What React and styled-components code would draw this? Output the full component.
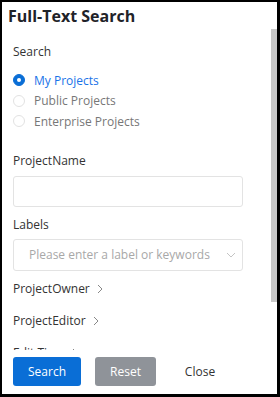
import React, { useState } from "react";
import styled, { createGlobalStyle } from "styled-components";

const Global = createGlobalStyle`
  html, body { margin: 0; padding: 0; background: #fff; }
  body { font-family: "Open Sans", "Noto Sans", sans-serif; color: #333; }
`;

const Frame = styled.div`
  width: 280px;
  height: 397px;
  box-sizing: border-box;
  border-style: solid;
  border-color: #000;
  border-width: 2px 3px 3px 2px;
  background: #fff;
  display: flex;
  flex-direction: column;
  position: relative;
`;

const Header = styled.div`
  height: 27px;
  padding-left: 6px;
  display: flex;
  align-items: center;
  font-size: 16px;
  font-weight: 700;
  color: #1f2329;
  flex-shrink: 0;
`;

const Body = styled.div`
  flex: 1;
  overflow: hidden;
  padding: 14px 0 0 11px;
  position: relative;
`;

const Thumb = styled.div`
  position: absolute;
  right: 0;
  top: 0;
  width: 6px;
  height: 273px;
  background: #c8c8c8;
`;

const Label = styled.div`
  font-size: 12px;
  line-height: 18px;
  color: #333;
  margin-bottom: ${(p) => p.$mb || 0}px;
`;

const RadioGroup = styled.div`
  display: flex;
  flex-direction: column;
  gap: 2px;
  margin-bottom: 21px;
`;

const RadioRow = styled.label`
  display: flex;
  align-items: center;
  gap: 9px;
  height: 18.5px;
  font-size: 12px;
  color: ${(p) => (p.$on ? "#1a73e8" : "#777")};
  cursor: pointer;
`;

const Dot = styled.span`
  width: 12px;
  height: 12px;
  box-sizing: border-box;
  border-radius: 50%;
  border: 1px solid ${(p) => (p.$on ? "#0a6ed6" : "#e2e2e2")};
  background: ${(p) => (p.$on ? "#0a6ed6" : "#fff")};
  display: flex;
  align-items: center;
  justify-content: center;
  &::after {
    content: "";
    width: 4px;
    height: 4px;
    border-radius: 50%;
    background: ${(p) => (p.$on ? "#fff" : "transparent")};
  }
`;

const Input = styled.input`
  display: block;
  width: 230px;
  height: 31px;
  box-sizing: border-box;
  border: 1px solid #e3e3e3;
  border-radius: 3px;
  outline: none;
  margin-bottom: 9px;
`;

const Select = styled.div`
  width: 230px;
  height: 32px;
  box-sizing: border-box;
  border: 1px solid #e3e3e3;
  border-radius: 3px;
  display: flex;
  align-items: center;
  justify-content: space-between;
  padding: 0 6px 0 15px;
  font-size: 12px;
  color: #a8a8a8;
  margin-bottom: 9px;
  white-space: nowrap;
  overflow: hidden;
`;

const Placeholder = styled.span`
  overflow: hidden;
  width: 196px;
`;

const Expand = styled.div`
  display: flex;
  align-items: center;
  gap: 5px;
  height: 18px;
  font-size: 12px;
  color: #333;
  margin-bottom: 14px;
`;

const Footer = styled.div`
  height: 44px;
  flex-shrink: 0;
  display: flex;
  align-items: center;
  padding: 0 0 2px 11px;
  box-sizing: border-box;
  background: #fff;
`;

const Button = styled.button`
  height: 29px;
  width: ${(p) => p.$w}px;
  padding: 0;
  border: none;
  border-radius: 3px;
  font-family: inherit;
  font-size: 12px;
  color: ${(p) => p.$color};
  background: ${(p) => p.$bg};
  margin-right: ${(p) => p.$mr}px;
  cursor: pointer;
`;

const Chevron = ({ dir }) => (
  <svg width="10" height="10" viewBox="0 0 10 10" fill="none" stroke={dir === "down" ? "#c4c4c4" : "#888"} strokeWidth="1">
    {dir === "down" ? <path d="M1 3l4 4 4-4" /> : <path d="M3 1l4 4-4 4" />}
  </svg>
);

const scopes = ["My Projects", "Public Projects", "Enterprise Projects"];

export default function App() {
  const [scope, setScope] = useState(0);
  return (
    <>
      <Global />
      <Frame>
        <Header>Full-Text Search</Header>
        <Body>
          <Thumb />
          <Label $mb={10}>Search</Label>
          <RadioGroup>
            {scopes.map((s, i) => (
              <RadioRow key={s} $on={scope === i} onClick={() => setScope(i)}>
                <Dot $on={scope === i} />
                {s}
              </RadioRow>
            ))}
          </RadioGroup>
          <Label $mb={6}>ProjectName</Label>
          <Input />
          <Label $mb={5}>Labels</Label>
          <Select>
            <Placeholder>Please enter a label or keywords</Placeholder>
            <Chevron dir="down" />
          </Select>
          <Expand>ProjectOwner <Chevron /></Expand>
          <Expand>ProjectEditor <Chevron /></Expand>
          <Expand>Edit Time <Chevron /></Expand>
        </Body>
        <Footer>
          <Button $bg="#0a6ed6" $color="#fff" $w={68} $mr={14}>Search</Button>
          <Button $bg="#8f9399" $color="#fff" $w={61} $mr={14}>Reset</Button>
          <Button $bg="transparent" $color="#333" $w={60} $mr={0}>Close</Button>
        </Footer>
      </Frame>
    </>
  );
}
